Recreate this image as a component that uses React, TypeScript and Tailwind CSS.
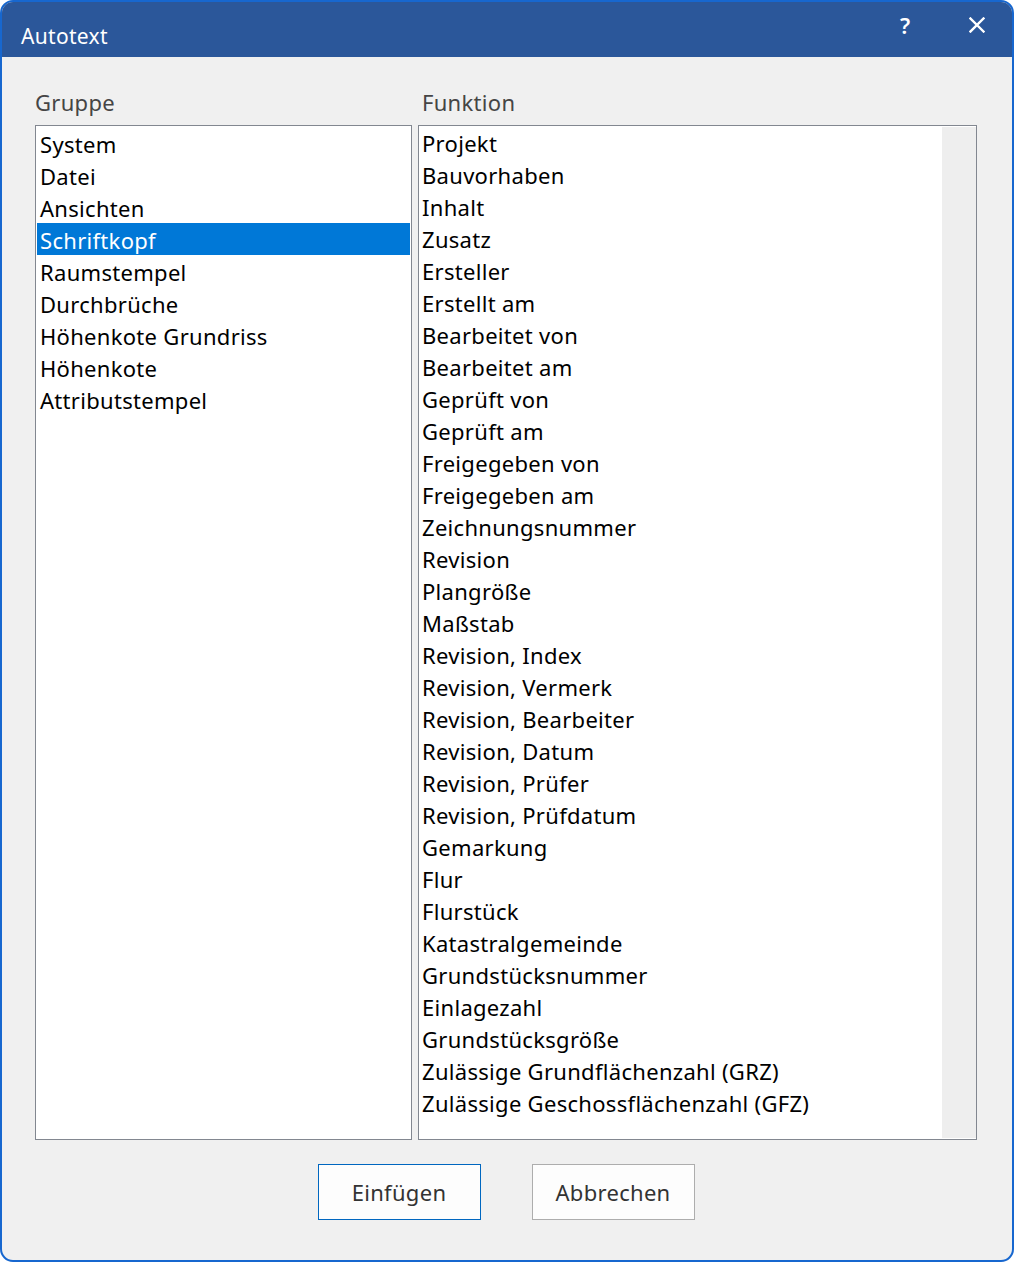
import React from "react";

const gruppe = [
  "System",
  "Datei",
  "Ansichten",
  "Schriftkopf",
  "Raumstempel",
  "Durchbrüche",
  "Höhenkote Grundriss",
  "Höhenkote",
  "Attributstempel",
];

const funktion = [
  "Projekt",
  "Bauvorhaben",
  "Inhalt",
  "Zusatz",
  "Ersteller",
  "Erstellt am",
  "Bearbeitet von",
  "Bearbeitet am",
  "Geprüft von",
  "Geprüft am",
  "Freigegeben von",
  "Freigegeben am",
  "Zeichnungsnummer",
  "Revision",
  "Plangröße",
  "Maßstab",
  "Revision, Index",
  "Revision, Vermerk",
  "Revision, Bearbeiter",
  "Revision, Datum",
  "Revision, Prüfer",
  "Revision, Prüfdatum",
  "Gemarkung",
  "Flur",
  "Flurstück",
  "Katastralgemeinde",
  "Grundstücksnummer",
  "Einlagezahl",
  "Grundstücksgröße",
  "Zulässige Grundflächenzahl (GRZ)",
  "Zulässige Geschossflächenzahl (GFZ)",
];

export default function App() {
  return (
    <div
      className="w-[1014px] h-[1262px] bg-white"
      style={{ fontFamily: '"Noto Sans", "Open Sans", sans-serif' }}
    >
      <div className="w-full h-full flex flex-col rounded-[13px] border-2 border-[#1767cf] bg-[#f0f0f0] overflow-hidden">
        {/* Title bar */}
        <div className="h-[55px] shrink-0 bg-[#2b579a] flex items-center text-white">
          <div className="pl-[19px] pt-[13px] text-[21px] tracking-[0.3px] leading-none">Autotext</div>
          <div className="ml-auto flex items-start self-start pt-[8px]">
            <div className="w-[40px] text-center text-[22px] font-semibold leading-[30px]">?</div>
            <div className="w-[32px]" />
            <div className="w-[40px] flex justify-center pt-[7px] mr-[15px]">
              <svg width="16" height="16" viewBox="0 0 16 16">
                <path d="M1.5 1.5 L14.5 14.5 M14.5 1.5 L1.5 14.5" stroke="white" strokeWidth="2.4" strokeLinecap="square" />
              </svg>
            </div>
          </div>
        </div>

        {/* Body */}
        <div className="flex-1 flex flex-col pl-[33px] pr-[35px] text-[22px] tracking-[0.3px]">
          <div className="flex gap-[6px] pt-[30px] h-[68px] text-[#454545] leading-[30px]">
            <div className="w-[377px]">Gruppe</div>
            <div className="pl-[4px]">Funktion</div>
          </div>
          <div className="flex gap-[6px] h-[1015px]">
            {/* Gruppe list */}
            <div className="w-[377px] h-full border border-[#828790] bg-white p-px text-black">
              {gruppe.map((g, i) => (
                <div
                  key={g}
                  className={
                    i === 3
                      ? "h-[32px] leading-[32px] pt-[1px] pl-[3px] bg-[#0078d7] text-white whitespace-nowrap"
                      : "h-[32px] leading-[32px] pt-[1px] pl-[3px] whitespace-nowrap"
                  }
                >
                  {g}
                </div>
              ))}
            </div>
            {/* Funktion list */}
            <div className="flex-1 h-full border border-[#828790] bg-white flex">
              <div className="flex-1 pl-[3px] pt-[1px] text-black">
                {funktion.map((f) => (
                  <div key={f} className="h-[32px] leading-[32px] whitespace-nowrap">
                    {f}
                  </div>
                ))}
              </div>
              <div className="w-[34px] my-px bg-[#eeeeee]" />
            </div>
          </div>
          {/* Buttons */}
          <div className="flex justify-center gap-[51px] pt-[24px]">
            <button className="w-[163px] h-[56px] border border-[#0067c0] bg-[#fdfdfd] text-[#333333]">
              Einfügen
            </button>
            <button className="w-[163px] h-[56px] border border-[#adadad] bg-[#fdfdfd] text-[#333333]">
              Abbrechen
            </button>
          </div>
        </div>
      </div>
    </div>
  );
}
